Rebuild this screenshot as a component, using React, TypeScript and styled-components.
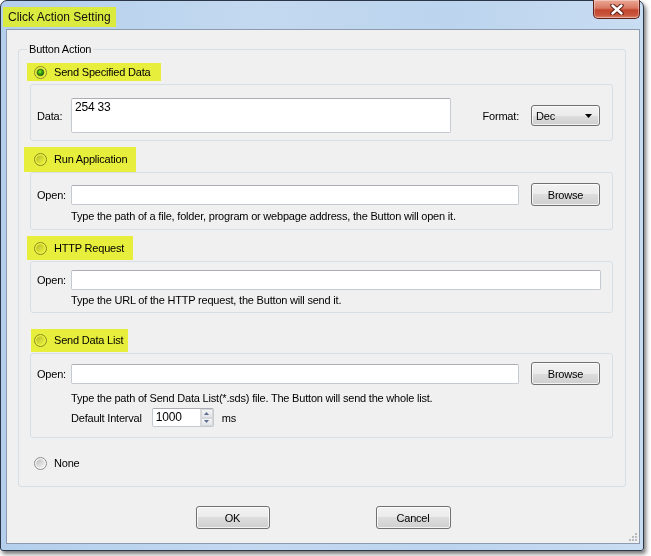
import React from "react";
import styled, { createGlobalStyle } from "styled-components";

const GlobalStyle = createGlobalStyle`
  html, body {
    margin: 0;
    padding: 0;
    background: #ffffff;
  }
  body {
    font-family: "Liberation Sans", Arial, sans-serif;
    font-size: 11px;
    letter-spacing: -0.2px;
    color: #000;
  }
`;

const Screen = styled.div`
  width: 651px;
  height: 556px;
  overflow: hidden;
  background: #ffffff;
`;

const Window = styled.div`
  width: 644px;
  height: 551px;
  box-sizing: border-box;
  display: flex;
  flex-direction: column;
  border: 1px solid #2b3646;
  border-radius: 7px 7px 3px 3px;
  background: linear-gradient(90deg, #b4cfec 0%, #c3d9f0 40%, #bcd4ee 70%, #c9ddf2 100%);
  box-shadow: 2px 3px 4px rgba(0, 0, 0, 0.55);
`;

const TitleBar = styled.div`
  height: 28px;
  flex: none;
  display: flex;
  align-items: flex-start;
  justify-content: space-between;
  padding-right: 3px;
`;

const TitleText = styled.span`
  margin: 6px 0 0 2px;
  height: 20px;
  padding: 0 5px 0 5px;
  display: flex;
  align-items: center;
  background: #dbea3e;
  font-size: 12px;
  letter-spacing: 0;
  color: #111;
`;

const CloseButton = styled.div`
  margin-top: -1px;
  width: 47px;
  height: 19px;
  box-sizing: border-box;
  display: flex;
  align-items: center;
  justify-content: center;
  border: 1px solid #5d2119;
  border-top: none;
  border-radius: 0 0 5px 5px;
  background: linear-gradient(180deg, #eba795 0%, #d97a64 45%, #c4462e 55%, #c9563e 85%, #de8c70 100%);
  box-shadow: inset 0 0 0 1px rgba(255, 255, 255, 0.35);
`;

const Client = styled.div`
  position: relative;
  flex: 1;
  margin: 0 3px 6px 5px;
  border: 1px solid #8c9cae;
  background: #f0f0f0;
  display: flex;
  flex-direction: column;
`;

const Grip = styled.svg`
  position: absolute;
  right: 1px;
  bottom: 1px;
`;

const GroupBox = styled.fieldset`
  margin: 13px 13px 0 11px;
  padding: 0 12px 14px 11px;
  border: 1px solid #d5dfe5;
  border-radius: 3px;
  display: flex;
  flex-direction: column;
`;

const Legend = styled.legend`
  margin-left: -3px;
  padding: 0 2px;
  line-height: 13px;
  font-size: 11px;
`;

const OptionRow = styled.div<{ $mt: number }>`
  height: 18px;
  margin-top: ${(p) => p.$mt}px;
  display: flex;
  align-items: center;
`;

const Highlight = styled.span<{ $l: number; $r: number; $h: number; $on: boolean }>`
  position: relative;
  display: inline-flex;
  align-items: center;
  gap: 7px;
  height: ${(p) => p.$h}px;
  margin-left: ${(p) => 4 - p.$l}px;
  padding: 0 ${(p) => p.$r}px 0 ${(p) => p.$l}px;

  &::after {
    content: "";
    position: absolute;
    inset: 0;
    background: ${(p) => (p.$on ? "#f6fd3f" : "transparent")};
    mix-blend-mode: multiply;
    pointer-events: none;
  }
`;

const Panel = styled.div<{ $mt: number; $pad: string }>`
  margin-top: ${(p) => p.$mt}px;
  padding: ${(p) => p.$pad};
  border: 1px solid #d5dfe5;
  border-radius: 3px;
  display: flex;
  flex-direction: column;
`;

const FieldRow = styled.div<{ $h: number }>`
  height: ${(p) => p.$h}px;
  display: flex;
  align-items: center;
`;

const FieldLabel = styled.span`
  width: 34px;
  flex: none;
`;

const TextBox = styled.div`
  flex: 1;
  height: 20px;
  box-sizing: border-box;
  background: #ffffff;
  border: 1px solid #c5c9d0;
  border-top-color: #abadb3;
  border-radius: 2px;
`;

const DataArea = styled.div`
  width: 380px;
  height: 35px;
  box-sizing: border-box;
  padding: 1px 3px;
  background: #ffffff;
  border: 1px solid #c5c9d0;
  border-top-color: #abadb3;
  border-radius: 2px;
  font-size: 12px;
`;

const FormatLabel = styled.span`
  margin-left: auto;
`;

const Combo = styled.div`
  margin-left: 12px;
  width: 69px;
  height: 21px;
  box-sizing: border-box;
  padding: 0 7px 0 4px;
  display: flex;
  align-items: center;
  justify-content: space-between;
  border: 1px solid #707070;
  border-radius: 3px;
  background: linear-gradient(180deg, #f2f2f2 0%, #ebebeb 50%, #dddddd 50%, #cfcfcf 100%);
  box-shadow: inset 0 0 0 1px rgba(255, 255, 255, 0.7);
`;

const PushButton = styled.div<{ $w: number; $ml?: number }>`
  width: ${(p) => p.$w}px;
  height: 23px;
  margin-left: ${(p) => p.$ml ?? 0}px;
  box-sizing: border-box;
  flex: none;
  display: flex;
  align-items: center;
  justify-content: center;
  border: 1px solid #707070;
  border-radius: 3px;
  background: linear-gradient(180deg, #f2f2f2 0%, #ebebeb 50%, #dddddd 50%, #cfcfcf 100%);
  box-shadow: inset 0 0 0 1px rgba(255, 255, 255, 0.75);
`;

const HelpText = styled.div<{ $mt: number }>`
  margin: ${(p) => p.$mt}px 0 0 34px;
  height: 13px;
  line-height: 13px;
  white-space: nowrap;
`;

const IntervalRow = styled.div`
  margin: 3px 0 0 34px;
  height: 19px;
  display: flex;
  align-items: center;
`;

const SpinBox = styled.div`
  margin: 0 8px 0 10px;
  width: 62px;
  height: 19px;
  box-sizing: border-box;
  display: flex;
  background: #ffffff;
  border: 1px solid #c5c9d0;
  border-top-color: #abadb3;
  border-radius: 2px;
`;

const SpinValue = styled.span`
  flex: 1;
  padding-left: 3px;
  font-size: 12px;
  line-height: 17px;
`;

const SpinButtons = styled.div`
  width: 12px;
  display: flex;
  flex-direction: column;
  border-left: 1px solid #dadada;
`;

const SpinArrow = styled.div`
  flex: 1;
  display: flex;
  align-items: center;
  justify-content: center;
  background: linear-gradient(180deg, #f4f4f4, #e2e4e8);
  border: 1px solid #d4d7dc;
`;

const DialogButtons = styled.div`
  margin-top: 19px;
  display: flex;
  justify-content: center;
  gap: 106px;
`;

const Radio = ({ checked }: { checked?: boolean }) => (
  <svg width="13" height="13" viewBox="0 0 13 13">
    <defs>
      <linearGradient id="radioFill" x1="0" y1="0" x2="1" y2="1">
        <stop offset="0" stopColor="#bdbdbd" />
        <stop offset="1" stopColor="#f7f7f7" />
      </linearGradient>
      <radialGradient id="radioDot" cx="0.42" cy="0.38" r="0.65">
        <stop offset="0" stopColor="#9af07e" />
        <stop offset="0.55" stopColor="#2f9a35" />
        <stop offset="1" stopColor="#1a5a1f" />
      </radialGradient>
    </defs>
    <circle cx="6.5" cy="6.5" r="6" fill="#f6f6f6" stroke="#8a8c8c" strokeWidth="1" />
    <circle cx="6.5" cy="6.5" r="4.3" fill="url(#radioFill)" />
    {checked && <circle cx="6.5" cy="6.5" r="3.3" fill="url(#radioDot)" stroke="#245e22" strokeWidth="0.6" />}
  </svg>
);

type OptionProps = {
  label: string;
  mt: number;
  l: number;
  r: number;
  h: number;
  checked?: boolean;
  marked?: boolean;
};

const Option = ({ label, mt, l, r, h, checked, marked = true }: OptionProps) => (
  <OptionRow $mt={mt}>
    <Highlight $l={l} $r={r} $h={h} $on={marked}>
      <Radio checked={checked} />
      <span>{label}</span>
    </Highlight>
  </OptionRow>
);

const ComboArrow = () => (
  <svg width="7" height="4" viewBox="0 0 7 4">
    <path d="M0 0 H7 L3.5 4 Z" fill="#000" />
  </svg>
);

const CloseGlyph = () => (
  <svg width="14" height="11" viewBox="0 0 14 11">
    <path d="M2.5 1.5 L11.5 9.5 M11.5 1.5 L2.5 9.5" stroke="#5a1c12" strokeWidth="4.4" strokeLinecap="round" />
    <path d="M2.5 1.5 L11.5 9.5 M11.5 1.5 L2.5 9.5" stroke="#ffffff" strokeWidth="2.4" strokeLinecap="round" />
  </svg>
);

const App = () => {
  return (
    <Screen>
      <GlobalStyle />
      <Window>
        <TitleBar>
          <TitleText>Click Action Setting</TitleText>
          <CloseButton>
            <CloseGlyph />
          </CloseButton>
        </TitleBar>
        <Client>
          <GroupBox>
            <Legend>Button Action</Legend>

            <Option label="Send Specified Data" mt={7} l={7} r={10} h={18} checked />
            <Panel $mt={3} $pad="13px 12px 7px 6px">
              <FieldRow $h={35}>
                <FieldLabel>Data:</FieldLabel>
                <DataArea>254 33</DataArea>
                <FormatLabel>Format:</FormatLabel>
                <Combo>
                  <span>Dec</span>
                  <ComboArrow />
                </Combo>
              </FieldRow>
            </Panel>

            <Option label="Run Application" mt={9} l={10} r={9} h={25} />
            <Panel $mt={4} $pad="10px 12px 6px 6px">
              <FieldRow $h={23}>
                <FieldLabel>Open:</FieldLabel>
                <TextBox />
                <PushButton $w={69} $ml={12}>Browse</PushButton>
              </FieldRow>
              <HelpText $mt={4}>
                Type the path of a file, folder, program or webpage address, the Button will open it.
              </HelpText>
            </Panel>

            <Option label="HTTP Request" mt={9} l={7} r={9} h={24} />
            <Panel $mt={4} $pad="8px 11px 5px 6px">
              <FieldRow $h={20}>
                <FieldLabel>Open:</FieldLabel>
                <TextBox />
              </FieldRow>
              <HelpText $mt={4}>Type the URL of the HTTP request, the Button will send it.</HelpText>
            </Panel>

            <Option label="Send Data List" mt={18} l={3} r={5} h={23} />
            <Panel $mt={4} $pad="8px 12px 10px 6px">
              <FieldRow $h={23}>
                <FieldLabel>Open:</FieldLabel>
                <TextBox />
                <PushButton $w={69} $ml={12}>Browse</PushButton>
              </FieldRow>
              <HelpText $mt={7}>
                Type the path of Send Data List(*.sds) file. The Button will send the whole list.
              </HelpText>
              <IntervalRow>
                <span>Default Interval</span>
                <SpinBox>
                  <SpinValue>1000</SpinValue>
                  <SpinButtons>
                    <SpinArrow>
                      <svg width="5" height="3" viewBox="0 0 5 3">
                        <path d="M0 3 L2.5 0 L5 3 Z" fill="#5a6f8e" />
                      </svg>
                    </SpinArrow>
                    <SpinArrow>
                      <svg width="5" height="3" viewBox="0 0 5 3">
                        <path d="M0 0 H5 L2.5 3 Z" fill="#5a6f8e" />
                      </svg>
                    </SpinArrow>
                  </SpinButtons>
                </SpinBox>
                <span>ms</span>
              </IntervalRow>
            </Panel>

            <Option label="None" mt={16} l={0} r={0} h={18} marked={false} />
          </GroupBox>

          <DialogButtons>
            <PushButton $w={74}>OK</PushButton>
            <PushButton $w={75}>Cancel</PushButton>
          </DialogButtons>

          <Grip width="10" height="10" viewBox="0 0 10 10">
            {[
              [7, 1],
              [7, 4],
              [4, 4],
              [7, 7],
              [4, 7],
              [1, 7],
            ].map(([x, y]) => (
              <rect key={`${x}-${y}`} x={x} y={y} width="2" height="2" fill="#b8bcc2" />
            ))}
          </Grip>
        </Client>
      </Window>
    </Screen>
  );
};

export default App;
